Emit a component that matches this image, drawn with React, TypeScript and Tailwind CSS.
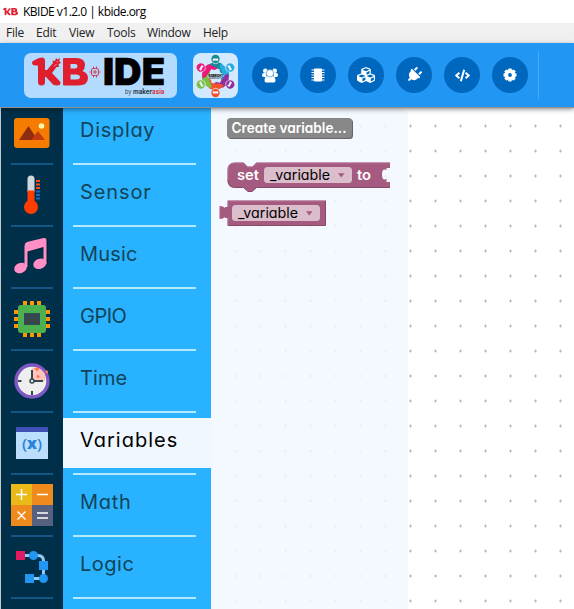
import React from "react";
import { FaCode, FaCubes, FaPlug } from "react-icons/fa";

function BrandMark({ className }: { className: string }) {
  return (
    <svg viewBox="0 0 56 29" className={className} fill="#df1f2d">
      <path d="M3 3 Q6 .5 10 .5 Q13 .5 13 4 V25 Q13 28.500 9.500 28.500 Q6 28.500 6 25 V8.500 H3.500 Q0 8.500 0 5.800 Q0 3.800 3 3Z" />
      <path d="M12 13 H15 L21 6 L20.500 3.500 L23 4 L24 1 L25.500 2.500 L28 1 L27.300 4 L29 6 L26.500 7 L27 10 L24.500 10 L20 16 L28.500 25 Q29 28.500 25 28.500 L21.500 28 L14 20 H12Z" />
      <path fillRule="evenodd" d="M32 1 H44 Q53 1 53 8 Q53 12 50.500 14 Q56 16 56 21 Q56 28.500 46 28.500 H32 Q31 28.500 31 27 V2 Q31 1 32 1Z M38.500 7 V11.500 H43 Q45.500 11.500 45.500 9.300 Q45.500 7 43 7Z M38.500 17.500 V22.500 H44 Q48 22.500 48 20 Q48 17.500 44 17.500Z" />
      <path d="M22 9.500 L24.500 7 M25 5.500 L26 4" stroke="#f3b7c4" strokeWidth=".8" />
    </svg>
  );
}

function Logo() {
  return (
    <div className="ml-6 h-[45px] w-[153px] rounded-[7px] bg-[#b3dbff]">
      <svg viewBox="24 53 153 45" className="h-full w-full overflow-visible">
        <g transform="translate(32 57)"><BrandMarkSized /></g>
        <g fill="none" stroke="#d33e51" strokeWidth="1">
          <rect x="91.500" y="68.500" width="7" height="7" rx="1.500" />
          <path d="M89.500 72H91 M99 72H100.500 M93.500 66.500V68 M96.500 66.500V68 M93.500 76V77.500 M96.500 76V77.500" />
          <rect x="94" y="71" width="2" height="2" />
        </g>
        <text x="103" y="84.500" textLength="62" lengthAdjust="spacingAndGlyphs" stroke="#000" strokeWidth=".6" className="font-['Inter',sans-serif] text-[37px] font-black">IDE</text>
        <text x="125" y="94" textLength="6.500" lengthAdjust="spacingAndGlyphs" fill="#344151" className="font-['Inter',sans-serif] text-[6px]">by</text>
        <text x="133" y="94" textLength="31.500" lengthAdjust="spacingAndGlyphs" fill="#2c3a48" className="font-['Inter',sans-serif] text-[7px] font-bold">maker<tspan fill="#dc3545">asia</tspan></text>
      </svg>
    </div>
  );
}

function BrandMarkSized() {
  return <BrandMark className="h-[29px] w-[56px]" />;
}

const people = [
  { color: "#168b93", turn: "rotate(0 22.5 23)" },
  { color: "#25ace0", turn: "rotate(60 22.5 23)" },
  { color: "#932da0", turn: "rotate(120 22.5 23)" },
  { color: "#f2512c", turn: "rotate(180 22.5 23)" },
  { color: "#79c043", turn: "rotate(240 22.5 23)" },
  { color: "#ed187c", turn: "rotate(300 22.5 23)" },
];

function Community() {
  return (
    <svg viewBox="0 0 45 45" className="ml-4 h-[45px] w-[45px] rounded-[8px] bg-[#d2e9ff]">
      {people.map((p) => (
        <g key={p.color} transform={p.turn}>
          <path d="M15.500 11.500 Q22.500 7.500 28.500 10.500 Q30.500 12 30 20.500 Q26.500 20.500 26.500 16 L16.500 15 L14.500 13.500Z" fill={p.color} />
          <circle cx="22.500" cy="6" r="4.200" fill={p.color} />
          <path d="M19.800 5.500 H25.200 V8 Q22.500 6.800 19.800 8Z" fill="#eff4f8" />
          <path d="M20 10 Q22.500 11.300 25 10" fill="none" stroke="#eff4f8" strokeWidth=".7" />
        </g>
      ))}
      <text x="15.500" y="23.500" textLength="14.500" lengthAdjust="spacingAndGlyphs" className="font-['Inter',sans-serif] text-[3.500px] font-black">KIDBRIGHT</text>
      <text x="15.500" y="26.300" textLength="14" lengthAdjust="spacingAndGlyphs" className="font-['Inter',sans-serif] text-[2.300px]">COMMUNITY</text>
    </svg>
  );
}

function GroupIcon() {
  return (
    <svg viewBox="0 0 16 15" className="h-[15px] w-4" fill="#fff">
      <circle cx="3.300" cy="2.800" r="2.300" />
      <circle cx="12.700" cy="2.800" r="2.300" />
      <path d="M0 7 Q0 5 2 5 H5 L4 9 H1.500 Q0 9 0 7Z M16 7 Q16 5 14 5 H11 L12 9 H14.500 Q16 9 16 7Z" />
      <path d="M5 8 H11 Q13.500 9 13.500 12 Q13.500 14.500 12 14.500 H4 Q2.500 14.500 2.500 12 Q2.500 9 5 8Z" />
      <circle cx="8" cy="5.300" r="3.700" stroke="#0067bf" strokeWidth=".5" />
    </svg>
  );
}

function ChipIcon() {
  return (
    <svg viewBox="0 0 14 14" className="h-[14px] w-[14px]" fill="#fff">
      <rect x="3" y=".5" width="8" height="13" rx=".8" />
      <path d="M.5 2H13.500 M.5 4.500H13.500 M.5 7H13.500 M.5 9.500H13.500 M.5 12H13.500" stroke="#fff" strokeWidth="1.100" />
    </svg>
  );
}

function GearIcon() {
  return (
    <svg viewBox="-7 -7 14 14" className="h-[14px] w-[14px]" fill="#fff">
      {[0, 45, 90, 135].map((a) => (
        <rect key={a} x="-1.800" y="-6.500" width="3.600" height="13" rx=".8" transform={`rotate(${a})`} />
      ))}
      <circle r="4.900" />
      <circle r="1.900" fill="#0067bf" />
    </svg>
  );
}

const tools = [
  <GroupIcon />,
  <ChipIcon />,
  <FaCubes className="h-[18px] w-[18px]" />,
  <FaPlug className="h-4 w-4 rotate-45" />,
  <FaCode className="h-[15px] w-[15px]" />,
  <GearIcon />,
];

const DisplayIcon = () => (
  <>
    <rect x="14" y="118" width="35.500" height="30" rx="3" fill="#f57c00" />
    <path d="M19 140L28.500 126L37.500 140Z" fill="#8f2b10" />
    <path d="M31 140L38 131L45 140Z" fill="#c63a10" />
    <circle cx="41.500" cy="126" r="2.800" fill="#fff3b0" />
  </>
);
const SensorIcon = () => (
  <>
    <path d="M27.500 192V179Q27.500 175.500 31 175.500Q34.500 175.500 34.500 179V192Z" fill="#cfd8dc" />
    <path d="M27.500 190.500H34.500V202H27.500Z" fill="#ff3d00" />
    <circle cx="31" cy="207" r="7" fill="#ff3d00" />
    <path d="M36 181H40 M36 184.500H40 M36 188H40" stroke="#f4511e" strokeWidth="2" />
    <path d="M36 191.500H40 M36 195H40 M36 198.500H40" stroke="#1565c0" strokeWidth="2" />
  </>
);
const MusicIcon = () => (
  <g>
    <path d="M25 243Q25 242 26.500 241.500L44 238Q47 237.500 47 240V263H43.500V247L28 251V267H25Z" fill="#001b2b" opacity=".55" transform="translate(1 1)" />
    <path d="M24.500 246Q24.500 243 27 242L43.500 238Q46.500 237.500 46.500 240V264H43.500V247L27.500 251.500V267H24.500Z" fill="#ff8fc4" />
    <ellipse cx="20.500" cy="268" rx="6.500" ry="5" transform="rotate(-20 20.500 268)" fill="#ff8fc4" />
    <ellipse cx="39.800" cy="263.700" rx="6.700" ry="5" transform="rotate(-20 39.800 263.700)" fill="#ff8fc4" />
  </g>
);
const GpioIcon = () => (
  <>
    <g fill="#ff9800">
      {[25, 32, 39].map((x) => <rect key={x} x={x - 2} y="301" width="4" height="36" />)}
      {[312, 319, 326].map((y) => <rect key={y} x="14" y={y - 2} width="36" height="4" />)}
    </g>
    <rect x="18" y="305" width="28" height="28" rx="3" fill="#4caf50" />
    <rect x="24" y="313" width="16" height="12" rx="1" fill="#37474f" />
  </>
);
const TimeIcon = () => (
  <>
    <circle cx="32" cy="381" r="16" fill="#eee" stroke="#7e57c2" strokeWidth="3.400" />
    <path d="M32 381V368Q40 366 45 374V381Z" fill="#ffc5b9" />
    <path d="M32 370V381H43 M18 381H21.500 M32 391V395" fill="none" stroke="#37474f" strokeWidth="2" />
    <circle cx="32" cy="381" r="2" fill="#dce3e8" stroke="#37474f" strokeWidth="1.500" />
    <path d="M37 366L38 368L40 369L38 370L37 372L36 370L34 369L36 368Z" fill="#ff7358" />
    <circle cx="38" cy="376.500" r="1.500" fill="#ff7358" />
    <circle cx="46.700" cy="372" r="1.400" fill="#ff7358" />
  </>
);
const VariablesIcon = () => (
  <>
    <rect x="16" y="427" width="32" height="32" fill="#bbdefb" />
    <rect x="16" y="427" width="32" height="5" fill="#3f51b5" />
    <text x="22" y="449" textLength="20" lengthAdjust="spacingAndGlyphs" fill="#2983dc" className="font-['Open_Sans',sans-serif] text-[15px] font-semibold">(<tspan className="font-extrabold">x</tspan>)</text>
  </>
);
const MathIcon = () => (
  <>
    <path d="M11 484H32V505H11Z" fill="#eabb18" />
    <path d="M32 484H53V505H32V526H11V505H32Z" fill="#ee8b1c" />
    <path d="M32 505H53V526H32Z" fill="#586080" />
    <path d="M16 494.500H27 M21.500 489V500 M37 494.500H48 M17.500 511.500L25.500 519.500 M25.500 511.500L17.500 519.500 M37 513H48 M37 518H48" stroke="#fff" strokeWidth="1.400" />
  </>
);
const LogicIcon = () => (
  <>
    <path d="M20 555.500H38Q43.500 555.500 43.500 561V578.500H29" fill="none" stroke="#90caf9" strokeWidth="3" />
    <rect x="16" y="551" width="9" height="9" fill="#e01b60" />
    <circle cx="33.500" cy="555.500" r="4.500" fill="#2196f3" />
    <rect x="39" y="561" width="9" height="9" fill="#2196f3" />
    <circle cx="43.500" cy="578.500" r="4.500" fill="#2196f3" />
    <rect x="25" y="574" width="9" height="9" fill="#2196f3" />
  </>
);

const categories = [
  { name: "Display", Icon: DisplayIcon, box: "1 108 62 50", tracking: "tracking-[0.7px]" },
  { name: "Sensor", Icon: SensorIcon, box: "1 170 62 50", tracking: "tracking-[0.9px]" },
  { name: "Music", Icon: MusicIcon, box: "1 232 62 50", tracking: "tracking-[0.2px]" },
  { name: "GPIO", Icon: GpioIcon, box: "1 294 62 50", tracking: "tracking-[-0.5px]" },
  { name: "Time", Icon: TimeIcon, box: "1 356 62 50", tracking: "tracking-[0.1px]" },
  { name: "Variables", Icon: VariablesIcon, box: "1 418 62 50", tracking: "tracking-[1px]", active: true },
  { name: "Math", Icon: MathIcon, box: "1 480 62 50", tracking: "tracking-[0.7px]" },
  { name: "Logic", Icon: LogicIcon, box: "1 542 62 50", tracking: "tracking-[0.5px]" },
];

function Blocks() {
  return (
    <svg viewBox="211 108 197 130" className="h-[130px] w-[197px] font-['Inter',sans-serif] [font-feature-settings:'cv11']">
      <rect x="228" y="119" width="125" height="20" rx="3.500" fill="#666" />
      <rect x="227" y="118" width="125" height="20" rx="3.500" fill="#888" />
      <text x="231.500" y="133" textLength="115" lengthAdjust="spacingAndGlyphs" fill="#fff" className="text-[14px] font-semibold">Create variable...</text>

      <path d="M227.500 170Q227.500 162.500 235 162.500H243.500L247.500 166.500H252.500L256.500 162.500H390V168H386.500V170Q382 168 382 174.500Q382 181 386.500 179V182H390V187.500H256.500L252 191.500H248L243.500 187.500H235Q227.500 187.500 227.500 180Z" fill="#a55b80" />
      <path d="M228 180Q228 187.500 235 187.500H243.500L248 191.500H252L256.500 187.500H390" fill="none" stroke="#844966" />
      <path d="M228 180V170Q228 163 235 163H243.500L247.500 167H252.500L256.500 163H390" fill="none" stroke="#b77497" strokeWidth=".8" />
      <text x="237" y="180" textLength="22" lengthAdjust="spacingAndGlyphs" fill="#fff" className="text-[14px] font-semibold">set</text>
      <text x="357" y="180" textLength="14" lengthAdjust="spacingAndGlyphs" fill="#fff" className="text-[14px] font-semibold">to</text>
      <rect x="264" y="167" width="88" height="16" rx="3.500" fill="#dbbdcc" />
      <text x="270" y="180" textLength="60" lengthAdjust="spacingAndGlyphs" className="text-[14px]">_variable</text>
      <path d="M338 173.300H344.500L341.250 177.500Z" fill="#a55b80" />

      <path d="M227.500 200.500H326V225.500H227.500V218H225V217Q223.500 219 219.500 219V206Q223.500 206 225 208V207H227.500Z" fill="#a55b80" />
      <path d="M228 225.500H325.500V201" fill="none" stroke="#844966" />
      <path d="M228 225V218 M228 207V201H325" fill="none" stroke="#b77497" strokeWidth=".8" />
      <rect x="232" y="205" width="88" height="16" rx="3.500" fill="#dbbdcc" />
      <text x="238" y="218" textLength="60" lengthAdjust="spacingAndGlyphs" className="text-[14px]">_variable</text>
      <path d="M306 211.300H312.500L309.250 215.500Z" fill="#a55b80" />
    </svg>
  );
}

export default function App() {
  return (
    <div className="flex h-[609px] w-[574px] flex-col overflow-hidden bg-white font-['Open_Sans',sans-serif]">
      <div className="flex h-[23px] shrink-0 items-center pl-[3px] text-[12px] text-black">
        <BrandMark className="h-[9px] w-[15px]" />
        <span className="ml-[5px] tracking-[-0.52px] whitespace-nowrap">KBIDE v1.2.0 | kbide.org</span>
      </div>
      <nav className="flex h-5 shrink-0 items-center bg-[#f0f0f0] pl-1.5 text-[12px] tracking-[-0.25px] text-[#222]">
        <span className="w-[30px]">File</span>
        <span className="w-[33px]">Edit</span>
        <span className="w-[38px]">View</span>
        <span className="w-10">Tools</span>
        <span className="w-14 tracking-[-0.3px]">Window</span>
        <span>Help</span>
      </nav>
      <header className="relative z-10 flex h-16 shrink-0 items-center bg-[#2196f3] shadow-[0_1px_0_#8e9293,0_2px_5px_rgba(0,0,0,0.5)]">
        <Logo />
        <Community />
        <div className="ml-3.5 flex gap-3">
          {tools.map((icon, i) => (
            <button key={i} className="flex h-9 w-9 items-center justify-center rounded-full bg-[#0067bf] text-white">{icon}</button>
          ))}
        </div>
        <div className="ml-[10px] h-12 w-px bg-[#4caaf5]" />
      </header>
      <main className="flex min-h-0 flex-1 border-l border-[#c5c7c8] pt-px">
        <aside className="w-[62px] shrink-0 bg-[#003049]">
          {categories.map(({ name, Icon, box }) => (
            <div key={name} className="h-[62px]">
              <svg viewBox={box} className="h-[50px] w-[62px] overflow-visible"><Icon /></svg>
              <div className="mx-[10px] mt-[5px] h-0.5 bg-[#145683]" />
            </div>
          ))}
        </aside>
        <aside className="w-[148px] shrink-0 bg-[#29b2ff] font-['Inter',sans-serif] [font-feature-settings:'cv11']">
          {categories.map(({ name, tracking, active }) => (
            <div key={name} className="h-[62px]">
              <div className={`flex h-[50px] items-center pb-[6px] pl-[17px] text-[20px] ${tracking} ${active ? "bg-[#f0f7ff] text-black" : "text-[#114458]"}`}>{name}</div>
              <div className="mt-[5px] ml-[10px] h-0.5 w-[123px] bg-[#b3eaff]" />
            </div>
          ))}
        </aside>
        <section className="relative min-w-0 flex-1">
          <svg className="h-full w-full">
            <defs>
              <pattern id="grid" x="12" y="5.500" width="25" height="25" patternUnits="userSpaceOnUse">
                <path d="M11 12.500H14 M12.500 11V14" stroke="#b8b8b8" strokeWidth="1" />
              </pattern>
            </defs>
            <rect width="100%" height="100%" fill="url(#grid)" />
          </svg>
          <div className="absolute top-0 left-0 h-full w-[197px] rounded-tr-[8px] bg-[#f2f8ff]/85">
            <Blocks />
          </div>
        </section>
      </main>
    </div>
  );
}
